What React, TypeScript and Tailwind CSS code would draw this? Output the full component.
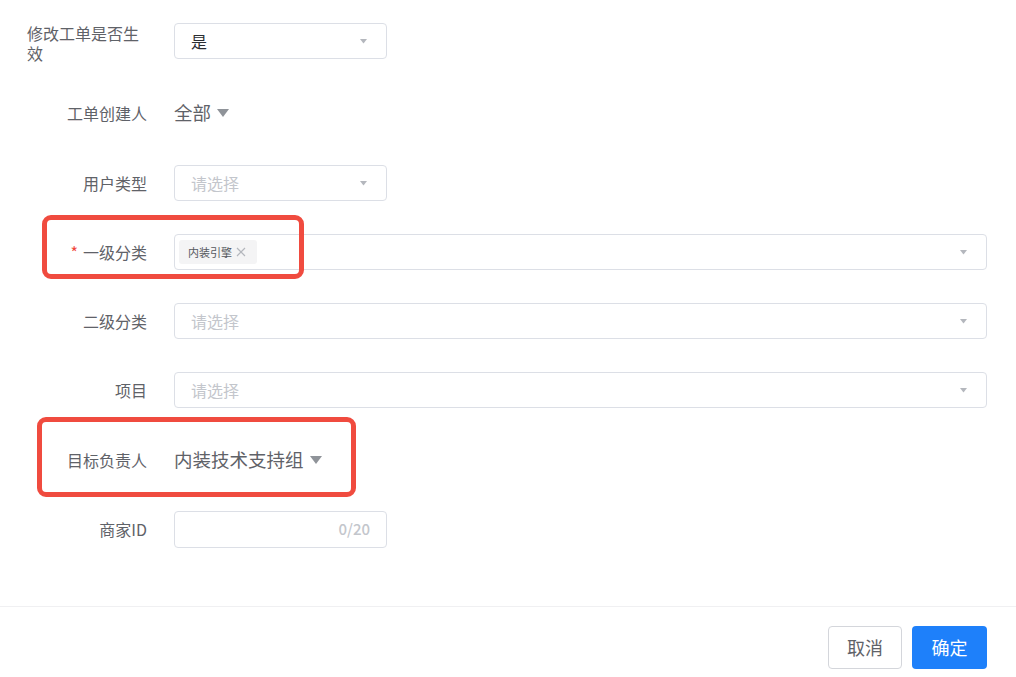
import React from "react";

const Arrow = () => (
  <svg width="7" height="5" viewBox="0 0 7 5" className="shrink-0">
    <path d="M0 0 L7 0 L3.5 4.5 Z" fill="#b4b7bd" />
  </svg>
);

const BigArrow = () => (
  <svg width="12" height="8" viewBox="0 0 12 8" className="shrink-0">
    <path d="M0 0 L12 0 L6 8 Z" fill="#8f9399" />
  </svg>
);

function Label({ children, required }: { children: React.ReactNode; required?: boolean }) {
  return (
    <div className="w-[120px] shrink-0 text-right text-[16px] leading-[20px] text-[#5f6268] pr-0">
      {required && <span className="text-[#f0463b] mr-[5px]">*</span>}
      {children}
    </div>
  );
}

function Select({
  w,
  value,
  placeholder,
}: {
  w: string;
  value?: string;
  placeholder?: string;
}) {
  return (
    <div
      className={`${w} h-[36px] border border-[#dcdfe6] rounded-[4px] flex items-center justify-between pl-[16px] pr-[19px] bg-white`}
    >
      {value ? (
        <span className="text-[16px] text-[#2b2d31]">{value}</span>
      ) : (
        <span className="text-[16px] text-[#c3c6cc]">{placeholder}</span>
      )}
      <Arrow />
    </div>
  );
}

export default function App() {
  return (
    <div className="relative w-[1016px] h-[677px] bg-white overflow-hidden font-['Noto_Sans_CJK_SC','Noto_Sans',sans-serif]">
      <div className="h-[606px] pl-[27px] pt-[22px] flex flex-col">
        {/* Row 1 */}
        <div className="flex items-start h-[37px] mb-[36px]">
          <div className="w-[120px] shrink-0 text-left text-[16px] leading-[20px] text-[#5f6268] pt-[1px] pr-[4px]">
            修改工单是否生效
          </div>
          <div className="ml-[27px] pt-[1px]">
            <Select w="w-[213px]" value="是" />
          </div>
        </div>

        {/* Row 2 */}
        <div className="flex items-center h-[36px] mb-[34px]">
          <Label>工单创建人</Label>
          <div className="ml-[27px] flex items-center gap-[6px]">
            <span className="text-[18.5px] text-[#5f6268]">全部</span>
            <BigArrow />
          </div>
        </div>

        {/* Row 3 */}
        <div className="flex items-center h-[36px] mb-[33px]">
          <Label>用户类型</Label>
          <div className="ml-[27px]">
            <Select w="w-[213px]" placeholder="请选择" />
          </div>
        </div>

        {/* Row 4 */}
        <div className="flex items-center h-[36px] mb-[33px]">
          <Label required>一级分类</Label>
          <div className="ml-[27px]">
            <div className="w-[813px] h-[36px] border border-[#dcdfe6] rounded-[4px] flex items-center justify-between pl-[4px] pr-[19px] bg-white">
              <div className="h-[24px] w-[78px] bg-[#f4f4f5] rounded-[3px] flex items-center pl-[9px] gap-[4px]">
                <span className="text-[11px] text-[#55585e] leading-none">内装引擎</span>
                <svg width="10" height="10" viewBox="0 0 10 10">
                  <path d="M1 1 L9 9 M9 1 L1 9" stroke="#b4b7bd" strokeWidth="1.2" />
                </svg>
              </div>
              <Arrow />
            </div>
          </div>
        </div>

        {/* Row 5 */}
        <div className="flex items-center h-[36px] mb-[33px]">
          <Label>二级分类</Label>
          <div className="ml-[27px]">
            <Select w="w-[813px]" placeholder="请选择" />
          </div>
        </div>

        {/* Row 6 */}
        <div className="flex items-center h-[36px] mb-[34px]">
          <Label>项目</Label>
          <div className="ml-[27px]">
            <Select w="w-[813px]" placeholder="请选择" />
          </div>
        </div>

        {/* Row 7 */}
        <div className="flex items-center h-[36px] mb-[33px]">
          <Label>目标负责人</Label>
          <div className="ml-[27px] flex items-center gap-[6px]">
            <span className="text-[18.5px] text-[#5f6268]">内装技术支持组</span>
            <BigArrow />
          </div>
        </div>

        {/* Row 8 */}
        <div className="flex items-center h-[36px]">
          <Label>商家ID</Label>
          <div className="ml-[27px]">
            <div className="w-[213px] h-[37px] border border-[#dcdfe6] rounded-[4px] flex items-center justify-end pr-[16px] bg-white">
              <span className="text-[15px] font-medium text-[#c3c6cc]">0/20</span>
            </div>
          </div>
        </div>
      </div>

      {/* Footer */}
      <div className="border-t border-[#f0f0f2] flex justify-end gap-[10px] pt-[19px] pr-[29px]">
        <button className="w-[74px] h-[43px] border border-[#d4d6db] rounded-[4px] bg-white text-[18px] text-[#5f6268]">
          取消
        </button>
        <button className="w-[75px] h-[43px] rounded-[4px] bg-[#1e80fa] text-[18px] text-white">
          确定
        </button>
      </div>

      {/* Red annotation boxes */}
      <div className="absolute left-[42px] top-[215px] w-[262px] h-[64px] border-[5px] border-[#f04b3f] rounded-[9px] pointer-events-none" />
      <div className="absolute left-[37px] top-[417px] w-[319px] h-[80px] border-[5px] border-[#f04b3f] rounded-[9px] pointer-events-none" />
    </div>
  );
}
